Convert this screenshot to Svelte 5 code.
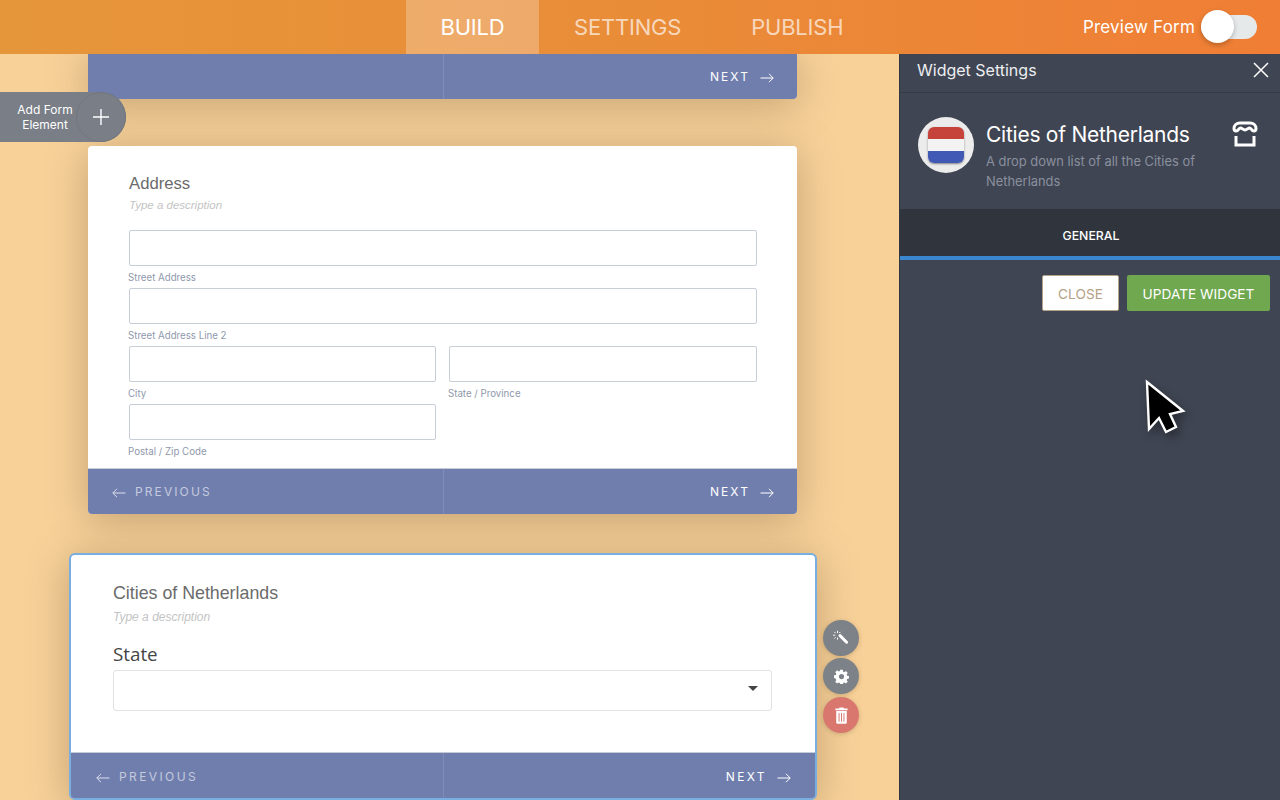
<script>
  let tabs = [
    { label: 'BUILD', active: true },
    { label: 'SETTINGS', active: false },
    { label: 'PUBLISH', active: false }
  ];
</script>

{#snippet formFooter(showPrevious)}
  <div class="footer">
    <div class="footer-side prev">
      {#if showPrevious}
        <svg class="arrow" viewBox="0 0 14 10" width="14" height="10"><path d="M13.5 5H.8M5 .8.8 5 5 9.2" /></svg>
        <span>PREVIOUS</span>
      {/if}
    </div>
    <div class="footer-side next">
      <span>NEXT</span>
      <svg class="arrow" viewBox="0 0 14 10" width="14" height="10"><path d="M.5 5h12.7M9 .8 13.2 5 9 9.2" /></svg>
    </div>
  </div>
{/snippet}

<div class="app">
  <header class="topbar">
    <nav class="tabs">
      {#each tabs as tab}
        <div class="tab" class:active={tab.active}>{tab.label}</div>
      {/each}
    </nav>
    <div class="preview">
      <span>Preview Form</span>
      <div class="switch"><div class="knob"></div></div>
    </div>
  </header>

  <div class="workspace">
    <main class="canvas">
      <div class="card stub">
        {@render formFooter(false)}
      </div>

      <div class="card address">
        <div class="card-body">
          <h3>Address</h3>
          <p class="desc">Type a description</p>
          <div class="fields">
            <div class="field wide"><div class="input"></div><small>Street Address</small></div>
            <div class="field wide"><div class="input"></div><small>Street Address Line 2</small></div>
            <div class="field"><div class="input"></div><small>City</small></div>
            <div class="field"><div class="input"></div><small>State / Province</small></div>
            <div class="field"><div class="input"></div><small>Postal / Zip Code</small></div>
          </div>
        </div>
        {@render formFooter(true)}
      </div>

      <div class="card selected">
        <div class="card-body">
          <h3>Cities of Netherlands</h3>
          <p class="desc">Type a description</p>
          <div class="state-label">State</div>
          <div class="select"><span class="caret"></span></div>
        </div>
        {@render formFooter(true)}

        <div class="tools">
          <div class="tool">
            <svg viewBox="0 0 20 20" width="20" height="20">
              <path class="wand" d="M9 7.600 15.600 14.200" />
              <path class="sparks" d="M6.500 2.800v2.200M6.500 9.600v2M2 7.200h2.200M9.400 3.900 8.200 5.100M3.300 3.900l1.300 1.300M3.300 10.600l1.300-1.300" />
            </svg>
          </div>
          <div class="tool">
            <svg viewBox="0 0 20 20" width="15" height="15">
              <path fill="#fff" fill-rule="evenodd" d="M8.300 1h3.400l.5 2.500 1.500.7 2.200-1.400 2.400 2.400-1.400 2.200.6 1.500 2.500.5v3.400l-2.500.5-.6 1.500 1.400 2.200-2.400 2.400-2.200-1.400-1.500.6-.5 2.400H8.300l-.5-2.400-1.500-.6-2.200 1.400-2.400-2.400 1.400-2.200-.6-1.500L0 11.800V8.400l2.500-.5.6-1.500-1.400-2.200 2.400-2.400 2.200 1.400 1.500-.7zM10 6.700a3.400 3.400 0 1 0 0 6.800 3.400 3.400 0 0 0 0-6.800z" />
            </svg>
          </div>
          <div class="tool danger">
            <svg viewBox="0 0 16 20" width="13" height="17">
              <path fill="#fff" d="M5.500 0h5l.5 1.500h4.500V3.500H.5V1.500H5zM1.500 4.500h13V19a1 1 0 0 1-1 1h-11a1 1 0 0 1-1-1z" />
              <path stroke="#d9776f" stroke-width="1.200" d="M5 7v10.500M8 7v10.500M11 7v10.500" />
            </svg>
          </div>
        </div>
      </div>

      <div class="add-element">
        <span>Add Form<br />Element</span>
        <div class="add-circle">
          <svg viewBox="0 0 16 16" width="16" height="16"><path d="M8 0v16M0 8h16" /></svg>
        </div>
      </div>
    </main>

    <aside class="panel">
      <div class="panel-head">
        <span>Widget Settings</span>
        <svg viewBox="0 0 16 16" width="16" height="16"><path d="M1 1l14 14M15 1 1 15" /></svg>
      </div>
      <div class="widget-info">
        <div class="widget-icon">
          <div class="flag"><i class="red"></i><i class="white"></i><i class="blue"></i></div>
        </div>
        <div class="widget-text">
          <h2>Cities of Netherlands</h2>
          <p>A drop down list of all the Cities of Netherlands</p>
        </div>
        <svg class="store" viewBox="0 0 26 26" width="26" height="26">
          <path d="M8 2h10c3.500 0 6 2.500 6 5.500 0 1.500-1 2.500-2.300 2.500-2 0-2.500-3-4.200-3-1.600 0-2.500 2-4.500 2s-2.900-2-4.500-2c-1.700 0-2.200 3-4.200 3C3 10 2 9 2 7.500 2 4.500 4.500 2 8 2z" />
          <path d="M4 15v9h18v-9" />
        </svg>
      </div>
      <div class="panel-tabs"><span>GENERAL</span></div>
      <div class="panel-actions">
        <button class="btn-close">CLOSE</button>
        <button class="btn-update">UPDATE WIDGET</button>
      </div>
    </aside>
  </div>

  <svg class="cursor" viewBox="0 0 42 56" width="42" height="56">
    <path d="M2 3 38 32 25 35 31 48 21 53 14 39 4 50z" />
  </svg>
</div>

<style>
  :global(body) {
    margin: 0;
    overflow: hidden;
  }

  .app {
    position: relative;
    width: 1280px;
    height: 800px;
    overflow: hidden;
    display: flex;
    flex-direction: column;
    font-family: Inter, "Liberation Sans", sans-serif;
  }

  .topbar {
    height: 54px;
    flex: none;
    display: flex;
    justify-content: space-between;
    background: linear-gradient(90deg, #e6963a 0%, #e98c38 50%, #f07e35 100%);
    padding-left: 406px;
    padding-right: 23px;
    box-sizing: border-box;
  }

  .tabs {
    display: flex;
  }

  .tab {
    display: flex;
    align-items: center;
    padding: 0 35px;
    font-size: 22px;
    color: rgba(255, 255, 255, 0.68);
    letter-spacing: -0.2px;
  }

  .tab.active {
    background: rgba(255, 255, 255, 0.25);
    color: #fff;
    padding: 0 34.500px;
  }

  .preview {
    display: flex;
    align-items: center;
    color: #fff;
    font-size: 17px;
    letter-spacing: 0.2px;
    gap: 6px;
  }

  .switch {
    position: relative;
    width: 56px;
    height: 24px;
    border-radius: 12px;
    background: #e6e9ea;
  }

  .knob {
    position: absolute;
    top: -5px;
    left: 0;
    width: 33px;
    height: 33px;
    border-radius: 50%;
    background: #fff;
    box-shadow: 0 2px 5px rgba(0, 0, 0, 0.25);
  }

  .workspace {
    flex: 1;
    display: flex;
    min-height: 0;
  }

  .canvas {
    position: relative;
    width: 899px;
    flex: none;
    background: #f8d199;
    overflow: hidden;
    padding-left: 88px;
    box-sizing: border-box;
  }

  .card {
    position: relative;
    width: 709px;
    background: #fff;
    border-radius: 4px;
    box-shadow: 0 6px 40px rgba(90, 70, 40, 0.34);
    display: flex;
    flex-direction: column;
  }

  .stub {
    border-radius: 0 0 4px 4px;
    margin-bottom: 47px;
  }

  .address {
    height: 368px;
    margin-bottom: 39px;
  }

  .selected {
    width: 748px;
    height: 247px;
    margin-left: -19px;
    box-sizing: border-box;
    border: 2px solid #78aee0;
    border-radius: 6px;
  }

  .card-body {
    flex: 1;
    padding: 28px 40px 0 41px;
  }

  .selected .card-body {
    padding: 28px 43px 0 42px;
  }

  h3 {
    margin: 0;
    font-family: "Liberation Sans", Arial, sans-serif;
    font-weight: 400;
    font-size: 16.700px;
    line-height: 20px;
    color: #6b6b6b;
  }

  .selected h3 {
    font-size: 17.800px;
  }

  .desc {
    margin: 3px 0 0;
    font-family: "Liberation Sans", Arial, sans-serif;
    font-style: italic;
    font-size: 11.500px;
    line-height: 16px;
    color: #c4c4c4;
  }

  .selected .desc {
    margin-top: 6px;
    font-size: 12px;
  }

  .fields {
    margin-top: 17px;
    display: grid;
    grid-template-columns: 307px 1fr;
    column-gap: 13px;
  }

  .field {
    height: 58px;
  }

  .field.wide {
    grid-column: 1 / 3;
  }

  .input {
    height: 36px;
    box-sizing: border-box;
    border: 1px solid #c8ced8;
    border-radius: 2px;
    background: #fff;
  }

  small {
    display: block;
    margin: 6px 0 0 -1px;
    font-family: Inter, sans-serif;
    font-size: 9.700px;
    line-height: 12px;
    color: #8f98ac;
  }

  .state-label {
    margin-top: 17px;
    font-family: "Open Sans", "Noto Sans", sans-serif;
    font-size: 18.800px;
    line-height: 24px;
    color: #454545;
  }

  .select {
    position: relative;
    margin-top: 4px;
    height: 41px;
    box-sizing: border-box;
    border: 1px solid #e2e2e2;
    border-radius: 3px;
  }

  .caret {
    position: absolute;
    right: 13px;
    top: 15px;
    border-left: 5px solid transparent;
    border-right: 5px solid transparent;
    border-top: 5px solid #444;
  }

  .footer {
    height: 45px;
    flex: none;
    display: flex;
    background: #707eae;
    border-radius: 0 0 4px 4px;
    border-top: 1px solid #c6cbd9;
    margin-top: -1px;
    font-size: 12px;
    letter-spacing: 2.100px;
  }

  .selected .footer {
    border-radius: 0 0 3px 3px;
    letter-spacing: 2.400px;
  }

  .selected .footer-side {
    padding-top: 2px;
  }

  .stub .footer {
    border-top: none;
    margin-top: 0;
  }

  .footer-side {
    flex: 1;
    display: flex;
    align-items: center;
    box-sizing: border-box;
  }

  .prev {
    padding-left: 24px;
    gap: 9px;
    color: rgba(255, 255, 255, 0.6);
    border-right: 1px solid #7f8cb8;
  }

  .selected .prev {
    padding-left: 25px;
  }

  .next {
    justify-content: flex-end;
    padding-right: 23px;
    gap: 10px;
    color: #fff;
  }

  .selected .next {
    padding-right: 24px;
  }

  .arrow {
    margin-top: 2px;
    fill: none;
    stroke: #fff;
    stroke-width: 1;
  }

  .prev .arrow {
    opacity: 0.75;
  }

  .tools {
    position: absolute;
    left: 752px;
    top: 65px;
    display: flex;
    flex-direction: column;
    gap: 2px;
  }

  .tool {
    width: 36px;
    height: 36px;
    border-radius: 50%;
    background: #7c8287;
    display: flex;
    align-items: center;
    justify-content: center;
    box-shadow: 0 1px 4px rgba(90, 70, 40, 0.25);
  }

  .tool.danger {
    margin-top: 1px;
    background: #d9776f;
  }

  .wand {
    fill: none;
    stroke: #fff;
    stroke-width: 3;
    stroke-linecap: round;
  }

  .sparks {
    fill: none;
    stroke: #fff;
    stroke-width: 1;
  }

  .add-element {
    position: absolute;
    left: 0;
    top: 38px;
    width: 126px;
    height: 50px;
    background: #797e87;
    border-radius: 0 25px 25px 0;
    color: #fff;
    font-size: 12px;
    line-height: 15px;
    text-align: center;
    display: flex;
    align-items: center;
  }

  .add-element span {
    width: 76px;
    margin-left: 7px;
    flex: none;
  }

  .add-circle {
    position: absolute;
    right: 0;
    top: 0;
    width: 50px;
    height: 50px;
    box-sizing: border-box;
    border: 1px solid #72767f;
    border-radius: 50%;
    display: flex;
    align-items: center;
    justify-content: center;
  }

  .add-circle path {
    fill: none;
    stroke: #fff;
    stroke-width: 1.400;
  }

  .panel {
    flex: 1;
    background: #3f4552;
    border-left: 1px solid #33373f;
    color: #fff;
  }

  .panel-head {
    height: 39px;
    box-sizing: border-box;
    display: flex;
    align-items: center;
    justify-content: space-between;
    padding: 0 11px 6px 17px;
    border-bottom: 1px solid #363b46;
    font-size: 16px;
    color: #eceef1;
  }

  .panel-head path {
    fill: none;
    stroke: #fff;
    stroke-width: 1.500;
  }

  .widget-info {
    position: relative;
    height: 116px;
    box-sizing: border-box;
    padding: 24px 18px 0;
    display: flex;
    gap: 12px;
  }

  .widget-icon {
    width: 56px;
    height: 56px;
    flex: none;
    border-radius: 50%;
    background: #ececec;
    display: flex;
    align-items: center;
    justify-content: center;
  }

  .flag {
    width: 36px;
    height: 36px;
    border-radius: 6px;
    overflow: hidden;
    display: flex;
    flex-direction: column;
    box-shadow: 0 1px 2px rgba(0, 0, 0, 0.45);
  }

  .flag i {
    flex: 1;
  }

  .red {
    background: #c5433a;
  }

  .white {
    background: #f3f3f3;
  }

  .blue {
    background: #4059b5;
  }

  .widget-text {
    width: 220px;
  }

  h2 {
    margin: 4px 0 0;
    font-weight: 400;
    font-size: 21px;
    line-height: 28px;
    letter-spacing: -0.25px;
    color: #fff;
  }

  .widget-text p {
    margin: 3px 0 0;
    font-size: 12.900px;
    line-height: 20px;
    color: #8a909e;
  }

  .store {
    position: absolute;
    left: 332px;
    top: 28px;
    fill: none;
    stroke: #fff;
    stroke-width: 3;
  }

  .panel-tabs {
    height: 51px;
    box-sizing: border-box;
    background: #30343d;
    border-bottom: 4px solid #3b87cf;
    display: flex;
    align-items: center;
    justify-content: center;
    font-size: 12.300px;
    font-weight: 500;
    padding: 5px 0 0 2px;
  }

  .panel-actions {
    display: flex;
    justify-content: flex-end;
    gap: 8px;
    padding: 15px 10px 0 0;
  }

  button {
    height: 36px;
    box-sizing: border-box;
    font-family: inherit;
    font-size: 13.700px;
    border-radius: 2px;
    border: 1px solid transparent;
    padding: 1px 0 0;
  }

  .btn-close {
    width: 77px;
    background: #fff;
    border-color: #b5a288;
    color: #b5a288;
  }

  .btn-update {
    width: 143px;
    background: #6fa84f;
    color: #fff;
  }

  .cursor {
    position: absolute;
    left: 1145px;
    top: 379px;
    fill: #000;
    stroke: #fff;
    stroke-width: 2.400;
    filter: drop-shadow(3px 5px 5px rgba(0, 0, 0, 0.35));
  }
</style>
